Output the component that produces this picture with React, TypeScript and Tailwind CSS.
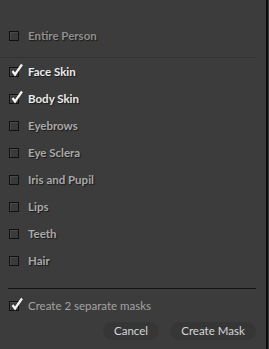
import React from "react";

function Box({ checked }: { checked?: boolean }) {
  return (
    <div className="relative w-[10px] h-[10px] border border-[#101010] bg-[#3a3a3a] shadow-[inset_1px_1px_0_#4a4a4a] shrink-0">
      {checked && (
        <svg className="absolute left-[1px] top-[-5px]" width="13" height="14" viewBox="0 0 13 14">
          <path d="M1.5 8 L4 11.5 L11 1.5" fill="none" stroke="#f4f4f4" strokeWidth="2.2" strokeLinecap="butt" strokeLinejoin="miter" />
        </svg>
      )}
    </div>
  );
}

function Row({ label, checked, tone }: { label: string; checked?: boolean; tone: string }) {
  return (
    <div className="h-[27px] flex items-center pl-[9px]">
      <Box checked={checked} />
      <span className={`ml-[9px] text-[11.5px] font-bold [text-shadow:1px_1px_1px_#1a1a1a] ${tone}`}>{label}</span>
    </div>
  );
}

export default function App() {
  const items: [string, boolean][] = [
    ["Face Skin", true],
    ["Body Skin", true],
    ["Eyebrows", false],
    ["Eye Sclera", false],
    ["Iris and Pupil", false],
    ["Lips", false],
    ["Teeth", false],
    ["Hair", false],
  ];
  return (
    <div className="w-[269px] h-[349px] bg-[#3c3c3c] flex overflow-hidden" style={{ fontFamily: 'Lato, "Open Sans", sans-serif' }}>
      <div className="w-[266px] h-full flex flex-col pt-[22px]">
        <Row label="Entire Person" tone="text-[#8f8f8f]" />
        <div className="mt-[8px] h-px w-[256px] bg-[#323232]" />
        {items.map(([l, c]) => (
          <Row key={l} label={l} checked={c} tone={c ? "text-[#ececec]" : "text-[#a9a9a9]"} />
        ))}
        <div className="mt-[14px] ml-[8px] h-px w-[248px] bg-[#141414]" />
        <div className="mt-[3px] h-[27px] flex items-center pl-[9px]">
          <Box checked />
          <span className="ml-[9px] text-[11.5px] text-[#a3a3a3]">Create 2 separate masks</span>
        </div>
        <div className="mt-[3px] flex justify-end gap-[11px] pr-[10px]">
          <button className="w-[56px] h-[18px] rounded-full bg-[#363636] text-[11.5px] text-[#d6d6d6] flex items-center justify-center">Cancel</button>
          <button className="w-[86px] h-[18px] rounded-full bg-[#363636] text-[11.5px] text-[#d6d6d6] flex items-center justify-center">Create Mask</button>
        </div>
      </div>
      <div className="w-[2px] h-full bg-[#0c0c0c]" />
      <div className="w-[1px] h-full bg-[#3a3a3a]" />
    </div>
  );
}
